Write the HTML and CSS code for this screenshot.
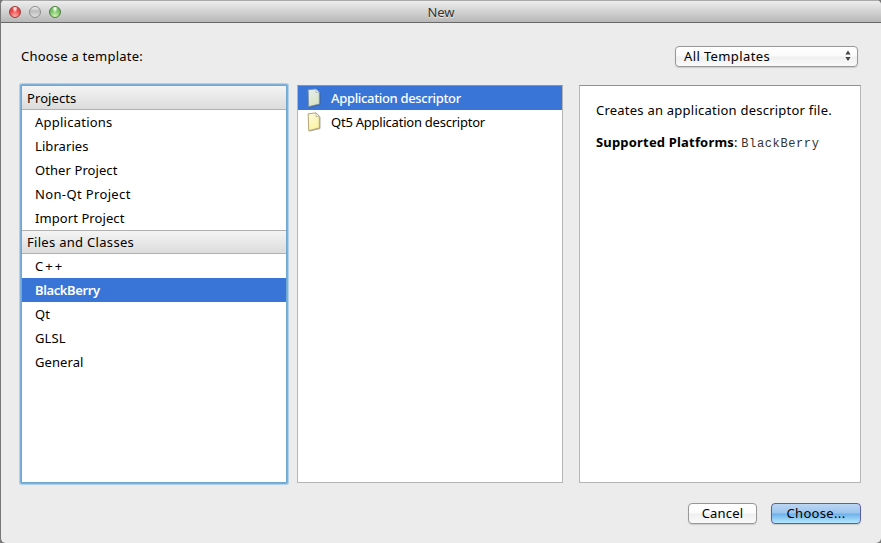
FILE: index.html
```html
<!DOCTYPE html>
<html lang="en">
<head>
<meta charset="utf-8">
<title>New</title>
<link rel="stylesheet" href="styles.css">
</head>
<body>
<svg width="0" height="0" class="defs" aria-hidden="true">
  <defs>
    <linearGradient id="pg" x1="0" y1="0" x2="0.4" y2="1"><stop offset="0" stop-color="#fdfbe0"/><stop offset="1" stop-color="#fbf4a4"/></linearGradient>
    <linearGradient id="ps" x1="0" y1="0" x2="0.4" y2="1"><stop offset="0" stop-color="#e6eef0"/><stop offset="1" stop-color="#dbe5c4"/></linearGradient>
  </defs>
</svg>
<div class="window">
  <header class="titlebar">
    <div class="lights"><i class="light red"></i><i class="light gray"></i><i class="light green"></i></div>
    <h1 class="title">New</h1>
  </header>
  <main class="content">
    <div class="top">
      <label class="prompt">Choose a template:</label>
      <div class="select"><span>All Templates</span>
        <svg width="6" height="12" viewBox="0 0 6 12"><path d="M3 0.5 5.6 4.5H0.4ZM3 11 0.4 7H5.6Z" fill="#444"/></svg>
      </div>
    </div>
    <div class="panels">
      <nav class="panel categories">
        <h2 class="group">Projects</h2>
        <ul>
          <li class="loose">Applications</li><li>Libraries</li><li>Other Project</li><li class="looser">Non-Qt Project</li><li>Import Project</li>
        </ul>
        <h2 class="group second">Files and Classes</h2>
        <ul>
          <li class="symbols">C++</li><li class="selected">BlackBerry</li><li>Qt</li><li>GLSL</li><li>General</li>
        </ul>
      </nav>
      <section class="panel templates">
        <div class="row selected">
          <svg width="16" height="20" viewBox="0 0 16 20"><path d="M3.3 19.2 14 16.6V5" fill="none" stroke="#3d5577" stroke-opacity=".6"/><path d="M2.2 1.8 10 .9 13.3 4.2V16L2.7 18.6Z" fill="url(#ps)" stroke="#8193a0" stroke-width=".8"/><path d="M10 .9V4.6L13.3 4.2Z" fill="#f6f9fa" stroke="#8d9ba3" stroke-width=".6"/></svg>
          <span>Application descriptor</span></div>
        <div class="row">
          <svg width="16" height="20" viewBox="0 0 16 20"><path d="M3.3 19.2 14 16.6V5" fill="none" stroke="#777" stroke-opacity=".6"/><path d="M2.2 1.8 10 .9 13.3 4.2V16L2.7 18.6Z" fill="url(#pg)" stroke="#a58f58" stroke-width=".8"/><path d="M10 .9V4.6L13.3 4.2Z" fill="#fff" stroke="#a0946f" stroke-width=".6"/></svg>
          <span>Qt5 Application descriptor</span></div>
      </section>
      <section class="panel details">
        <p>Creates an application descriptor file.</p>
        <p><b>Supported Platforms</b>: <code>BlackBerry</code></p>
      </section>
    </div>
    <footer class="actions">
      <button class="btn cancel">Cancel</button>
      <button class="btn primary">Choose...</button>
    </footer>
  </main>
</div>
</body>
</html>
```
FILE: styles.css
```css
* { box-sizing: border-box; margin: 0; padding: 0; }
body { width: 881px; height: 543px; overflow: hidden; background: #777; font: 13px/24px "Noto Sans", sans-serif; color: #000; }
.defs { position: absolute; }
.window { height: 543px; background: #ececec; border-left: 1px solid #777; border-radius: 5px; overflow: hidden; display: flex; flex-direction: column; }
.titlebar { height: 23px; flex: none; display: grid; grid-template-columns: 1fr auto 1fr; align-items: center; border-top: 1px solid #a9a9a9; border-bottom: 1px solid #686868; background: linear-gradient(#ededed, #b8b8b8); }
.lights { display: flex; gap: 8px; padding-left: 8px; }
.light { width: 12px; height: 12px; border-radius: 50%; border: 1px solid; }
.red { border-color: #9a3a37; background: radial-gradient(ellipse at 50% 12%, #ffdcdc 0 12%, transparent 38%), radial-gradient(circle at 50% 95%, #ffb2a8, #ea4447 60%); }
.gray { border-color: #8c8c8c; background: linear-gradient(#f0f0f0, #bcbcbc 40%, #e0e0e0); }
.green { border-color: #4c7d40; background: radial-gradient(ellipse at 50% 12%, #eaffe5 0 12%, transparent 38%), radial-gradient(circle at 50% 95%, #d5f8b4, #74bd62 60%); }
.title { font-size: 13px; font-weight: 400; line-height: 20px; color: #333; text-shadow: 0 1px 0 #e8e8e8; }
.content { flex: 1; display: flex; flex-direction: column; padding: 21px 20px 0; }
.top { display: flex; justify-content: space-between; align-items: center; height: 24px; padding-right: 3px; }
.prompt { letter-spacing: .22px; }
.select { width: 183px; height: 21px; border: 1px solid #979797; border-radius: 4px; background: linear-gradient(#fff, #fbfbfb 48%, #efefef 52%, #fafafa); box-shadow: 0 1px 1px #ccc; display: flex; justify-content: space-between; align-items: center; padding: 0 6px 0 8px; line-height: 19px; letter-spacing: .38px; }
.panels { margin-top: 17px; display: grid; grid-template-columns: 266px 266px 282px; column-gap: 10px; height: 398px; }
.panel { background: #fff; border: 1px solid #b5b5b5; border-top-color: #929292; }
.details { margin-left: 6px; width: 282px; padding: 12px 16px; }
.categories { border-color: #6fa8d3; box-shadow: 0 0 0 1px #7ab0d9, 0 0 0 2px #b4d0e4; border-radius: 1px; letter-spacing: .08px; }
.group { height: 24px; font-size: 13px; font-weight: 400; line-height: 24px; padding-left: 5px; background: linear-gradient(#f4f4f4, #dcdcdc); border-bottom: 1px solid #b0b0b0; }
.second { border-top: 1px solid #b0b0b0; line-height: 23px; letter-spacing: .3px; }
ul { list-style: none; }
li { height: 24px; padding-left: 13px; }
.loose { letter-spacing: .24px; }
.looser { letter-spacing: .36px; }
.symbols { letter-spacing: 2px; }
.selected { background: #3875d7; color: #fff; font-weight: 600; letter-spacing: -.4px; }
.row { height: 24px; display: flex; align-items: center; gap: 9px; padding-left: 8px; letter-spacing: -.23px; }
.row.selected { font-weight: 500; letter-spacing: -.33px; }
.details p { height: 32px; white-space: nowrap; letter-spacing: .23px; }
.details b { letter-spacing: .18px; }
code { font: 12px "Liberation Mono", monospace; letter-spacing: .62px; color: #333; }
.actions { display: flex; justify-content: flex-end; gap: 14px; margin-top: 20px; }
.btn { height: 21px; width: 69px; border: 1px solid #979797; border-radius: 4px; font: 13px/19px "Noto Sans", sans-serif; letter-spacing: .2px; color: #000; background: linear-gradient(#fff, #fbfbfb 48%, #efefef 52%, #fafafa); box-shadow: 0 1px 1px #ccc; }
.primary { width: 90px; letter-spacing: .33px; border-color: #5c5f9f; background: linear-gradient(#bcd6f3, #9bc5ee 48%, #6cb1ea 52%, #b6e8fc); }
```
